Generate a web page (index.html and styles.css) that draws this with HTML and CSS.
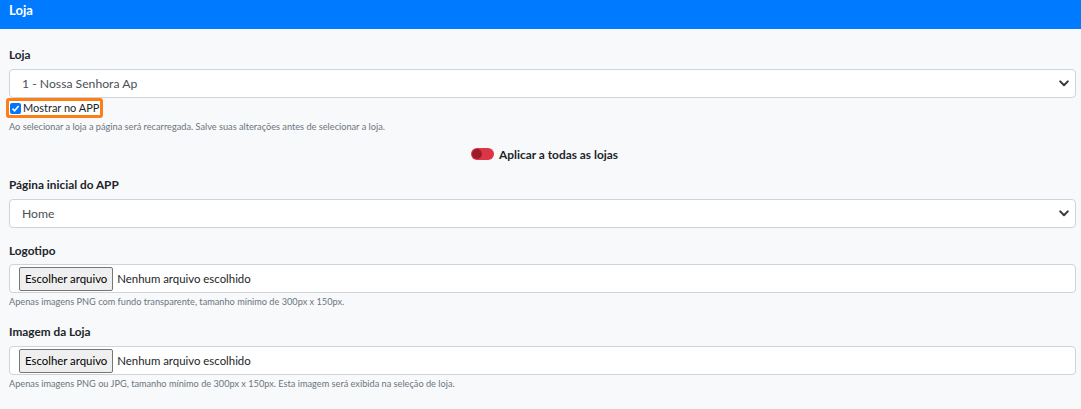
FILE: index.html
```html
<!DOCTYPE html>
<html lang="pt-BR">
<head>
<meta charset="utf-8">
<link rel="stylesheet" href="styles.css">
</head>
<body>
<div class="header">Loja</div>
<div class="content">
  <div class="label l1">Loja</div>
  <div class="select">
    <span>1 - Nossa Senhora Ap</span>
    <svg class="chev" width="10" height="7" viewBox="0 0 10 7"><path d="M1.2 1.4 L5 5.2 L8.8 1.4" fill="none" stroke="#343a40" stroke-width="2" stroke-linecap="round" stroke-linejoin="round"/></svg>
  </div>
  <div class="checkrow">
    <span class="checkwrap">
      <span class="cb"><svg width="9" height="9" viewBox="0 0 9 9"><path d="M1.5 4.6 L3.6 6.7 L7.6 2" fill="none" stroke="#fff" stroke-width="1.6"/></svg></span>
      <span class="cbtext">Mostrar no APP</span>
    </span>
  </div>
  <div class="help h1">Ao selecionar a loja a página será recarregada. Salve suas alterações antes de selecionar a loja.</div>
  <div class="togglerow">
    <span class="switch"><span class="knob"></span></span>
    <span class="togtext">Aplicar a todas as lojas</span>
  </div>
  <div class="label l2">Página inicial do APP</div>
  <div class="select">
    <span>Home</span>
    <svg class="chev" width="10" height="7" viewBox="0 0 10 7"><path d="M1.2 1.4 L5 5.2 L8.8 1.4" fill="none" stroke="#343a40" stroke-width="2" stroke-linecap="round" stroke-linejoin="round"/></svg>
  </div>
  <div class="label l3">Logotipo</div>
  <div class="file">
    <span class="fbtn">Escolher arquivo</span>
    <span class="ftext">Nenhum arquivo escolhido</span>
  </div>
  <div class="help h2">Apenas imagens PNG com fundo transparente, tamanho mínimo de 300px x 150px.</div>
  <div class="label l4">Imagem da Loja</div>
  <div class="file">
    <span class="fbtn">Escolher arquivo</span>
    <span class="ftext">Nenhum arquivo escolhido</span>
  </div>
  <div class="help h3">Apenas imagens PNG ou JPG, tamanho mínimo de 300px x 150px. Esta imagem será exibida na seleção de loja.</div>
</div>
</body>
</html>
```
FILE: styles.css
```css
html, body {
  margin: 0;
  padding: 0;
  background: #f8f9fa;
  font-family: Lato, "Noto Sans", sans-serif;
  color: #212529;
}
.header {
  height: 29px;
  background: #007bff;
  color: #fff;
  font-weight: 700;
  font-size: 13px;
  line-height: 21px;
  padding-left: 9px;
  box-sizing: border-box;
}
.content {
  padding: 0 5px 0 9px;
}
.label {
  font-weight: 700;
  font-size: 11.8px;
  line-height: 19px;
  height: 19px;
}
.l1 { margin-top: 16px; margin-bottom: 5px; }
.l2 { margin-top: 11px; margin-bottom: 5px; }
.l3 { margin-top: 13px; margin-bottom: 4px; }
.l4 { margin-top: 13px; margin-bottom: 5px; }
.select {
  height: 29px;
  box-sizing: border-box;
  border: 1px solid #ced4da;
  border-radius: 4px;
  background: #fff;
  display: flex;
  align-items: center;
  justify-content: space-between;
  padding: 0 6px 0 12px;
  font-size: 12.2px;
  color: #495057;
}
.chev { display: block; }
.checkrow {
  height: 20px;
  display: flex;
  margin-left: -3px;
}
.checkwrap {
  display: inline-flex;
  align-items: center;
  border: 3px solid #fd7e14;
  border-radius: 3px;
  height: 20px;
  box-sizing: border-box;
  padding: 0 1px 0 1px;
  background: #fff;
}
.cb {
  width: 11px;
  height: 11px;
  background: #0075ff;
  border-radius: 2px;
  display: inline-flex;
  align-items: center;
  justify-content: center;
  margin-right: 2px;
}
.cb svg { display: block; }
.cbtext {
  font-size: 11px;
  line-height: 14px;
}
.help {
  font-size: 9.2px;
  color: #6c757d;
  line-height: 14px;
  height: 14px;
}
.h1 { margin-top: 2px; }
.h2 { margin-top: 2px; }
.h3 { margin-top: 2px; }
.togglerow {
  margin-top: 10px;
  height: 20px;
  display: flex;
  align-items: center;
  justify-content: center;
  margin-left: 4px;
}
.switch {
  width: 23px;
  height: 12px;
  border-radius: 6px;
  background: #dc3545;
  position: relative;
  margin-right: 5px;
}
.knob {
  position: absolute;
  left: 1px;
  top: 1px;
  width: 10px;
  height: 10px;
  border-radius: 50%;
  background: #9b1c29;
}
.togtext {
  font-weight: 700;
  font-size: 11.9px;
}
.file {
  height: 29px;
  box-sizing: border-box;
  border: 1px solid #ced4da;
  border-radius: 4px;
  background: #fff;
  display: flex;
  align-items: center;
  padding-left: 9px;
  font-size: 11.4px;
}
.fbtn {
  height: 24px;
  box-sizing: border-box;
  border: 1px solid #767676;
  border-radius: 2px;
  background: #efefef;
  color: #000;
  padding: 0 5px;
  display: inline-flex;
  align-items: center;
  margin-right: 4px;
}
.ftext {
  color: #212529;
}
```
